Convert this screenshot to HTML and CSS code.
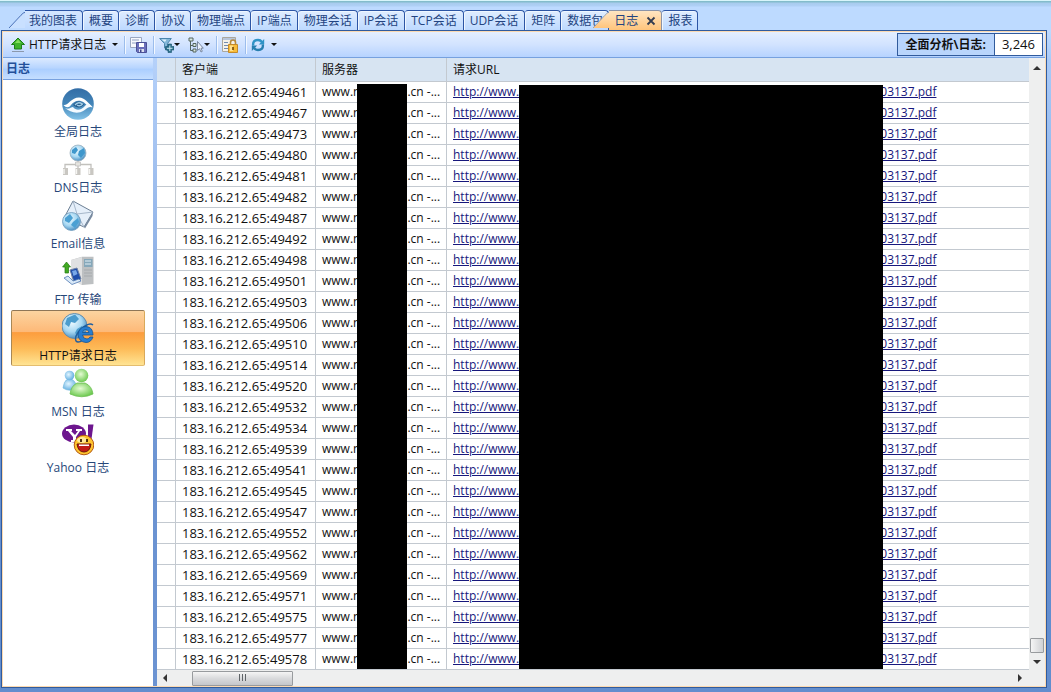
FILE: index.html
```html
<!DOCTYPE html>
<html lang="zh-CN">
<head>
<meta charset="utf-8">
<title>日志</title>
<link rel="stylesheet" href="styles.css">
</head>
<body>
<div class="window">
  <nav class="tabs">
    <button class="tab tab-first"><svg class="slant" viewBox="0 0 20 20"><path d="M0 20L15 4Q18 .5 20 .5V20Z" fill="#c9e0ff"/><path d="M0 20L15 4Q18 .5 20 .5" fill="none" stroke="#2c55a5"/></svg>我的图表</button>
    <button class="tab">概要</button>
    <button class="tab">诊断</button>
    <button class="tab">协议</button>
    <button class="tab">物理端点</button>
    <button class="tab">IP端点</button>
    <button class="tab">物理会话</button>
    <button class="tab tab-wide">IP会话</button>
    <button class="tab tab-wide">TCP会话</button>
    <button class="tab tab-wide">UDP会话</button>
    <button class="tab">矩阵</button>
    <button class="tab">数据包</button>
    <button class="tab tab-active"><svg class="slant" viewBox="0 0 20 20"><defs><linearGradient id="tabFill" x2="0" y2="1"><stop stop-color="#ffe5c2"/><stop offset="1" stop-color="#ffc47b"/></linearGradient></defs><path d="M0 20L15 4Q18 .5 20 .5V20Z" fill="url(#tabFill)"/><path d="M0 20L15 4Q18 .5 20 .5" fill="none" stroke="#8a93a8"/></svg>日志<svg class="close" viewBox="0 0 10 10"><path d="M1.500 1.500L8.500 8.500M8.500 1.500L1.500 8.500" stroke="#333c50" stroke-width="1.800"/></svg></button>
    <button class="tab">报表</button>
  </nav>
  <main class="frame">
    <div class="toolbar">
      <button class="tool tool-view"><svg width="14" height="16" viewBox="0 0 14 16"><path d="M7 1L13.500 7.500H10.500V12H3.500V7.500H.5Z" fill="#3fb32c" stroke="#1d7d1a"/><path d="M7 2.500L10 6H4Z" fill="#86df5e"/><path d="M1 14.500H13" stroke="#8b98ac"/></svg><span>HTTP请求日志</span><i class="caret"></i></button>
      <span class="sep"></span>
      <button class="tool" aria-label="保存"><svg width="17" height="17" viewBox="0 0 17 17"><path d="M.5 1.500H11.500V11.500H.5Z" fill="#f7f9fd" stroke="#9aa7c0"/><path d="M2 4H9M2 7H6" stroke="#8f9fc0"/><path d="M6.500 6.500H16.500V16.500H7.500L6.500 15.500Z" fill="#6a6fba" stroke="#4b5096"/><path d="M9 7H14V11H9Z" fill="#fff"/><path d="M9 13H14V16H9Z" fill="#dde0f0"/><path d="M10 13.500H11.500V16H10Z" fill="#3f4487"/></svg></button>
      <span class="sep"></span>
      <button class="tool" aria-label="过滤"><svg width="15" height="16" viewBox="0 0 15 16"><path d="M.7 1.500H12.300L8.500 6.500V13.500L5.500 11V6.500Z" fill="#83b7d8" stroke="#4b86ad"/><path d="M2.500 2.500H7.500L6 5Z" fill="#e0f3fc"/><path d="M9 7H12.500V9.500H15V13H12.500V15.500H9V13H6.500V9.500H9Z" fill="#2e7390" stroke="#155069" stroke-width=".6"/><path d="M10.800 8.500V14M8 11.300H13.500" stroke="#c8e4ef"/></svg><i class="caret"></i></button>
      <button class="tool tool-tree" aria-label="定位"><svg width="16" height="16" viewBox="0 0 16 16"><path d="M2.500 4V13.500H7M2.500 8.500H7" fill="none" stroke="#54655f"/><path d="M1 1H5V4H1ZM5 6.500H8V9.500H5ZM5 12H8V15H5Z" fill="#d9e9e1" stroke="#54655f"/><path d="M9.500 4.500V13.500L11.500 11.700L13 15L14.300 14.300L13 11.200H15.300Z" fill="#e9f0fa" stroke="#64748b" stroke-width=".8"/></svg><i class="caret"></i></button>
      <span class="sep"></span>
      <button class="tool" aria-label="锁定"><svg width="17" height="17" viewBox="0 0 17 17"><path d="M.5 1.500H13.500V15.500H.5Z" fill="#f4f1e9" stroke="#aaa79e"/><path d="M1 3H13" stroke="#b9c6db" stroke-width="2"/><path d="M2 6.500H6M2 9.500H6M2 12.500H6" stroke="#718bb2"/><path d="M8.500 9V6.500Q8.500 4 11 4T13.500 6.500V9" fill="none" stroke="#b78a3c" stroke-width="1.600"/><path d="M6.500 8.500H15.500V16.500H6.500Z" fill="#f8bd3b" stroke="#c48a2a"/><path d="M8 9.500H11V15H8Z" fill="#ffe08d"/><path d="M11 11V14" stroke="#724600" stroke-width="1.600"/></svg></button>
      <span class="sep"></span>
      <button class="tool tool-refresh" aria-label="刷新"><svg width="14" height="14" viewBox="0 0 14 14"><path d="M2.200 7.500Q1.500 2 7 2Q9.500 2 11 4" fill="none" stroke="#2f93c6" stroke-width="2.400"/><path d="M13.200 1V6.500H7.800Z" fill="#2f93c6"/><path d="M11.800 6.500Q12.500 12 7 12Q4.500 12 3 10" fill="none" stroke="#277fb0" stroke-width="2.400"/><path d="M.8 13V7.500H6.200Z" fill="#277fb0"/></svg><i class="caret"></i></button>
      <div class="counter"><b>全面分析\日志:</b><span>3,246</span></div>
    </div>
    <div class="body">
      <aside class="side">
        <h2>日志</h2>
        <button class="entry"><svg viewBox="0 0 32 32"><defs><linearGradient id="disc" x2="0" y2="1"><stop stop-color="#336da6"/><stop offset=".5" stop-color="#4385b8"/><stop offset="1" stop-color="#83c3e8"/></linearGradient><radialGradient id="globe" cx=".4" cy=".35" r=".65"><stop stop-color="#eefaff"/><stop offset=".6" stop-color="#a6d7f2"/><stop offset="1" stop-color="#4f92c4"/></radialGradient></defs><circle cx="16" cy="16" r="15.800" fill="url(#disc)"/><path d="M1.500 17C6 18 9 9.500 17 9.500C23 9.500 26 15 30.500 19C27 19.500 25 17 22 14.500C17 11 12 13 9 17C7 20 4 20 1.500 17Z" fill="#fff"/><path d="M3 20C7 22 9 19 11 19C14 23 19 22 22 19C25 15 27 14 30.500 19.500C28 18 25 20 22 22.500C15 27 8 24 3 20Z" fill="#f4faff"/><path d="M11 17Q16 10.500 22.500 16.500Q17 22 11 17Z" fill="#245b8b"/><path d="M13 17Q16 13 20.500 16Q18 19 15 17" fill="none" stroke="#a5cfe8" stroke-width="1.300"/></svg><span>全局日志</span></button>
        <button class="entry"><svg viewBox="0 0 32 32"><circle cx="16" cy="9" r="8" fill="url(#globe)" stroke="#9cb0be" stroke-width=".8"/><path d="M10 6L14 3L16 6L13 10L10 9ZM17 7L22 4L23 9L19 14L16 11Z" fill="#3f97cc"/><path d="M16 17V25M3 24V20.500H29V24" fill="none" stroke="#c2c1bd" stroke-width="1.300"/><path d="M13.500 18H18.500V22H13.500Z" fill="#e5e4df" stroke="#bbb" stroke-width=".7"/><path d="M1 24H6V31H1ZM13.500 24H18.500V31H13.500ZM26.500 24H31.500V31H26.500Z" fill="#c9c7c2"/><path d="M2 25V30M14.500 25V30M27.500 25V30" stroke="#f6f5f2" stroke-width="1.400"/></svg><span>DNS日志</span></button>
        <button class="entry"><svg viewBox="0 0 32 32"><path d="M11 1L31 12L22 27L2 18Z" fill="#e5effa" stroke="#6c7f94"/><path d="M11 1L15 14L31 12M2 18L15 14L22 27" fill="none" stroke="#a6b7ca"/><path d="M22 27L31 12L30.500 16L23 28.500Z" fill="#77899f"/><circle cx="9.500" cy="21.500" r="9" fill="url(#globe)" stroke="#6f9abb" stroke-width=".8"/><path d="M3 18L8 14L11 18L7 23L3 21ZM11 22L16 18L17 22L13 28L9 25Z" fill="#4ba0d3"/></svg><span>Email信息</span></button>
        <button class="entry"><svg viewBox="0 0 32 32"><path d="M9 4L20 .8H31.500V28L20 29L9 23Z" fill="#bdc0c2"/><path d="M9 4L20 1V29L9 23Z" fill="#e0e1e2"/><path d="M22 3H30.500V11H22Z" fill="#86a8ba"/><path d="M23 5H29M23 8H29" stroke="#e2eef5"/><path d="M22 14H30M22 17H30M22 20H30" stroke="#a6aaad"/><path d="M8 14L15 12L19 23L12 26Z" fill="#1f4dab" stroke="#6e81a2"/><path d="M10 15L14 14L15.500 18L11.500 20Z" fill="#79a8e8"/><path d="M2 22L10 28.500L19 25L17 23L11 25L6 20Z" fill="#d8e8f7" stroke="#4f78b2" stroke-width=".8"/><path d="M4.500 6L8.500 11H6.500V17H3V11H.6Z" fill="#42aa22" stroke="#227a12" stroke-width=".7"/></svg><span>FTP 传输</span></button>
        <button class="entry selected"><svg viewBox="0 0 32 32"><circle cx="12.500" cy="14" r="12.500" fill="url(#globe)" stroke="#648ba8"/><path d="M5 6L13 2.500L17 7L13 11L9 10L7 15L3 12ZM15 17L20 14L21 19L16 24L13 21Z" fill="#4b9ccd"/><path d="M31 13Q27 9.500 18 18Q12 25 14 29Q16 31.500 21 28" fill="none" stroke="#215f9f" stroke-width="1.400"/><path d="M31 23H20.500Q21 27 25 27Q27 27 28 25H31Q29 30.500 24 30.500Q17 30 16 23Q17 14.500 24 14.500Q31 15 31 23ZM20.500 20.500H27Q26 17.500 23.500 17.500Q21 17.500 20.500 20.500Z" fill="#277dd0" stroke="#145494" stroke-width=".8"/></svg><span>HTTP请求日志</span></button>
        <button class="entry"><svg viewBox="0 0 32 32"><defs><radialGradient id="green" cx=".45" cy=".4" r=".65"><stop stop-color="#e4fbd2"/><stop offset="1" stop-color="#64c646"/></radialGradient><radialGradient id="blue" cx=".4" cy=".4" r=".65"><stop stop-color="#e1f5ff"/><stop offset="1" stop-color="#5cabdf"/></radialGradient></defs><path d="M1 20Q2 13 5 11.500H10Q14 13 15 21Q7 24 1 20Z" fill="url(#blue)" stroke="#78bbe0" stroke-width=".7"/><circle cx="7.500" cy="7.500" r="4.800" fill="url(#blue)"/><path d="M8 26Q9 18 15 15H23Q30 18 31 26Q20 31.500 8 26Z" fill="url(#green)" stroke="#6cbf52" stroke-width=".8"/><circle cx="19.500" cy="7.500" r="6.800" fill="url(#green)"/></svg><span>MSN 日志</span></button>
        <button class="entry"><svg viewBox="0 0 32 32"><ellipse cx="12" cy="9.500" rx="12" ry="9" fill="#6d168e"/><path d="M26 .5H31.500L29.500 15H26Z" fill="#6d168e"/><path d="M4 5H10V7H9L13 11L16 7H14V5H20V7H18L14 13V16H16V18H9V16H11V13L6 7H4Z" fill="#fff"/><circle cx="22" cy="21" r="9.800" fill="#ffc52f" stroke="#b45a14"/><ellipse cx="20" cy="16" rx="5" ry="3" fill="#ffe998"/><path d="M19 15V18M25 15V18" stroke="#402007" stroke-width="1.800"/><path d="M15 20H29Q28 28 22 28Q16 28 15 20Z" fill="#c21b16" stroke="#6b160a"/><path d="M17 20.500H27V22H17Z" fill="#fff"/></svg><span>Yahoo 日志</span></button>
      </aside>
      <div class="splitter"></div>
      <section class="grid">
        <div class="list">
          <table>
            <colgroup><col class="c-mark"><col class="c-client"><col class="c-server"><col></colgroup>
            <thead><tr><th></th><th>客户端</th><th>服务器</th><th>请求URL</th></tr></thead>
            <tbody id="rows"></tbody>
          </table>
          <div class="mask mask-server"></div>
          <div class="mask mask-url"></div>
        </div>
        <div class="vbar"><i class="arrow up"></i><i class="vthumb"></i><i class="arrow down"></i></div>
        <div class="hbar"><i class="arrow left"></i><i class="hthumb"><svg width="9" height="8" viewBox="0 0 9 8"><path d="M1.500 0V7M4.500 0V7M7.500 0V7" stroke="#5f6468"/></svg></i><i class="arrow right"></i></div>
        <div class="corner"></div>
      </section>
    </div>
  </main>
</div>
<script src="app.js"></script>
</body>
</html>
```
FILE: styles.css
```css
* { box-sizing: border-box; }
body {
  margin: 0;
  font: 12px/16px "Open Sans", "Noto Sans CJK SC", sans-serif;
  color: #111;
}
button {
  font: inherit;
  color: inherit;
  background: none;
  border: 0;
  padding: 0;
}
svg { flex: none; }
.window {
  height: 100vh;
  display: flex;
  flex-direction: column;
  padding: 10px 4px 4px 1px;
  background: linear-gradient(#d8f5fb 0, #d8f5fb 1px, #83bccb 1px, #83bccb 2px, #a8cbed 3px, #afd0f6 6px, #bddaff 7px, #bddaff 30px, #a8caf8 60px, #6791d2 420px, #628dce 100%);
}
.tabs {
  display: flex;
  flex: none;
  height: 20px;
  padding-left: 24px;
}
.tab {
  height: 20px;
  flex: none;
  padding: 0 5px 0 6px;
  white-space: nowrap;
  color: #234481;
  border: solid #2c55a5;
  border-width: 1px 1px 0 0;
  border-radius: 3px 4px 0 0;
  background: linear-gradient(#e0edff, #bdd9ff);
  box-shadow: inset 1px 1px #eef6ff;
}
.tab-wide { padding-right: 6px; }
.tab-first, .tab-active {
  position: relative;
  border-radius: 0 4px 0 0;
  box-shadow: none;
}
.tab-first { padding-left: 4px; background: linear-gradient(#d5e6ff, #bdd9ff); }
.tab-active {
  display: flex;
  align-items: center;
  gap: 8px;
  padding-left: 5px;
  background: linear-gradient(#ffe5c2, #ffc47b);
  border-color: #8a93a8;
}
.slant {
  position: absolute;
  right: 100%;
  top: -1px;
  width: 16px;
  height: 20px;
}
.close { width: 10px; height: 10px; }
.frame {
  flex: 1;
  min-height: 0;
  display: flex;
  flex-direction: column;
  border: 1px solid #315b9c;
  box-shadow: inset 0 0 0 1px #fbd9b0;
  padding: 1px;
}
.toolbar {
  flex: none;
  height: 26px;
  display: flex;
  align-items: center;
  padding: 0 2px 0 8px;
  background: linear-gradient(#e4efff, #d2e3ff 50%, #b6d3ff);
  border-bottom: 1px solid #76a1df;
}
.tool { display: flex; align-items: center; }
.tool-view { gap: 4px; }
.tool-view .caret { margin-left: 2px; }
.tool-tree { margin-left: 8px; }
.tool-refresh { gap: 6px; }
.caret {
  border: solid transparent;
  border-width: 3px 3px 0;
  border-top-color: #111;
}
.sep {
  width: 2px;
  height: 18px;
  margin: 0 4px 0 6px;
  background: linear-gradient(90deg, #9cbdec 1px, #f3f8ff 1px);
}
.counter {
  margin-left: auto;
  display: flex;
  height: 23px;
  line-height: 21px;
  border: 1px solid #315b9c;
  background: #b9d5fc;
}
.counter b { padding: 0 8px; }
.counter span {
  padding: 0 7px;
  font-size: 13px;
  background: #fff;
  border-left: 1px solid #315b9c;
}
.body { flex: 1; min-height: 0; display: flex; }
.side { flex: none; width: 150px; background: #fff; }
.side h2 {
  margin: 0 0 6px;
  height: 22px;
  padding-left: 3px;
  font-size: 12px;
  line-height: 21px;
  color: #234f99;
  background: linear-gradient(#dceaff, #b9d6ff 45%, #accfff 55%, #c5deff);
  border-bottom: 1px solid #78a1df;
}
.entry {
  display: flex;
  flex-direction: column;
  align-items: center;
  gap: 4px;
  width: 134px;
  height: 56px;
  margin-left: 8px;
  padding-top: 2px;
  color: #274779;
}
.entry svg { width: 32px; height: 32px; }
.selected {
  color: #111;
  padding-top: 1px;
  border: 1px solid;
  border-color: #8e7657 #d8a95b #e4bd6f #a98855;
  border-radius: 2px;
  background: linear-gradient(#fcd4a0, #fdb978 38%, #fc9d3e 40%, #fdbb58 70%, #ffe493);
}
.splitter { flex: none; width: 4px; background: linear-gradient(#b5d1fa, #6b93d2 65%); }
.grid {
  flex: 1;
  min-width: 0;
  display: grid;
  grid-template: minmax(0, 1fr) 16px / minmax(0, 1fr) 16px;
  background: #fff;
}
.list { position: relative; overflow: hidden; }
table {
  width: 100%;
  table-layout: fixed;
  border-collapse: separate;
  border-spacing: 0;
}
.c-mark { width: 19px; }
.c-client { width: 140px; }
.c-server { width: 131px; }
th, td {
  height: 21px;
  padding: 0 0 0 6px;
  text-align: left;
  white-space: nowrap;
  border: solid #c3c9d0;
  border-width: 0 1px 1px 0;
  overflow: hidden;
}
th { height: 24px; font-weight: 400; background: #d7e4f2; }
th:last-child, td:last-child { border-right: 0; }
td a { color: #17177c; }
.client { font-size: 13px; }
.gap { display: inline-block; height: 1px; }
.gap-server { width: 47px; }
.gap-url { width: 361px; }
.mask { position: absolute; bottom: 1px; background: #000; }
.mask-server { left: 200px; top: 26px; width: 50px; }
.mask-url { left: 362px; top: 27px; width: 364px; }
.vbar, .hbar { display: flex; align-items: center; background: #eeefef; }
.vbar { flex-direction: column; padding: 8px 0 6px; }
.hbar { padding: 0 7px 0 6px; }
.corner { background: #eeefef; }
.arrow { border: 3px solid transparent; }
.up { border-width: 0 4px 4px; border-bottom-color: #333; }
.down { border-width: 4px 4px 0; border-top-color: #333; margin-top: 7px; }
.left { border-width: 4px 4px 4px 0; border-right-color: #333; }
.right { border-width: 4px 0 4px 4px; border-left-color: #333; margin-left: auto; }
.vthumb {
  width: 14px;
  height: 15px;
  margin-top: auto;
  border: 1px solid #989b9e;
  border-radius: 1px;
  background: linear-gradient(90deg, #f5f5f5, #cfd1d4);
}
.hthumb {
  display: flex;
  align-items: center;
  justify-content: center;
  width: 101px;
  height: 15px;
  margin-left: 25px;
  border: 1px solid #989b9e;
  border-radius: 1px;
  background: linear-gradient(#f5f5f5, #d9dadc 50%, #c5c7cb);
}
```
FILE: app.js
```js
const ports = [
  49461, 49467, 49473, 49480, 49481, 49482, 49487, 49492, 49498, 49501,
  49503, 49506, 49510, 49514, 49520, 49532, 49534, 49539, 49541, 49545,
  49547, 49552, 49562, 49569, 49571, 49575, 49577, 49578
];

document.getElementById('rows').innerHTML = ports.map(port => `
  <tr>
    <td></td>
    <td class="client">183.16.212.65:${port}</td>
    <td>www.n<span class="gap gap-server"></span>.cn -...</td>
    <td><a href="#">http://www.<span class="gap gap-url"></span>03137.pdf</a></td>
  </tr>`).join('');
```
